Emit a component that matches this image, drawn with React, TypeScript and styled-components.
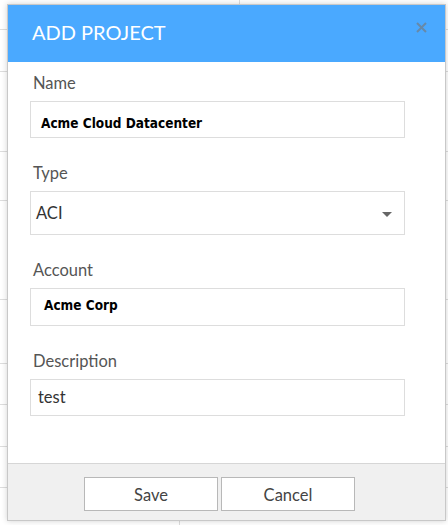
import React from "react";
import styled, { createGlobalStyle } from "styled-components";

const Global = createGlobalStyle`
  html, body { margin: 0; padding: 0; }
  body {
    width: 448px;
    height: 525px;
    overflow: hidden;
    background: #ffffff;
    font-family: Lato, "Open Sans", "Liberation Sans", sans-serif;
  }
  * { box-sizing: border-box; }
`;

const Page = styled.div`
  position: relative;
  width: 448px;
  height: 525px;
  overflow: hidden;
`;

const Backdrop = styled.div`
  display: flex;
  flex-direction: column;
  width: 100%;
`;

const BgRow = styled.div<{ $h: number }>`
  height: ${(p) => p.$h}px;
  border-bottom: 1px solid #dddddd;
  display: flex;
`;

const BgCell = styled.div<{ $w: number }>`
  width: ${(p) => p.$w}px;
  border-right: 1px solid #dddddd;
`;

const Modal = styled.div`
  position: absolute;
  left: 7px;
  top: 4px;
  width: 439px;
  height: 517px;
  background: #ffffff;
  border: 1px solid #c8c8c8;
  box-shadow: 0 0 6px rgba(0, 0, 0, 0.18);
  display: flex;
  flex-direction: column;
`;

const Header = styled.div`
  height: 57px;
  background: #4aa9ff;
  display: flex;
  align-items: center;
  justify-content: space-between;
  padding: 0 18px 0 24px;
  flex-shrink: 0;
`;

const Title = styled.h2`
  margin: 0;
  font-family: Lato, "Open Sans", sans-serif;
  font-weight: 400;
  font-size: 20px;
  line-height: 24px;
  color: #ffffff;
  margin-top: -3px;
`;

const Close = styled.button`
  border: 0;
  background: transparent;
  padding: 0;
  width: 11px;
  height: 11px;
  margin-top: -13px;
  margin-right: 0;
  display: flex;
  cursor: pointer;
`;

const Body = styled.div`
  flex: 1;
  padding: 13px 40px 0 22px;
  display: flex;
  flex-direction: column;
`;

const Field = styled.div`
  display: flex;
  flex-direction: column;
  margin-bottom: 27px;
`;

const Label = styled.label`
  display: block;
  height: 20px;
  line-height: 16px;
  font-size: 16.5px;
  color: #555555;
  padding-left: 3px;
  margin-bottom: 6px;
`;

const Box = styled.div<{ $h: number; $pl: number; $pt: number }>`
  position: relative;
  width: 375px;
  height: ${(p) => p.$h}px;
  border: 1px solid #dddddd;
  background: #ffffff;
  padding-left: ${(p) => p.$pl}px;
  padding-top: ${(p) => p.$pt}px;
  display: flex;
  align-items: flex-start;
`;

const BoldValue = styled.span`
  font-family: "DejaVu Sans Condensed", "DejaVu Sans", Tahoma, sans-serif;
  font-weight: 700;
  font-size: 13.5px;
  line-height: normal;
  color: #000000;
`;

const PlainValue = styled.span`
  font-size: 16.5px;
  line-height: normal;
  color: #333333;
`;

const Caret = styled.span`
  position: absolute;
  right: 12px;
  top: 20px;
  width: 0;
  height: 0;
  border-left: 5px solid transparent;
  border-right: 5px solid transparent;
  border-top: 5px solid #666666;
`;

const Footer = styled.div`
  height: 57px;
  background: #f0f0f0;
  border-top: 1px solid #d6d6d6;
  display: flex;
  align-items: flex-start;
  padding: 13px 0 0 76px;
  gap: 3px;
  flex-shrink: 0;
`;

const Button = styled.button`
  width: 134px;
  height: 34px;
  background: #ffffff;
  border: 1px solid #b8b8b8;
  font-family: Lato, "Open Sans", sans-serif;
  font-size: 16.5px;
  color: #444444;
  padding: 2px 0 0 0;
  cursor: pointer;
`;

export default function App() {
  const rows = [31, 43, 81, 50, 100, 65, 42, 43, 42, 40];
  return (
    <Page>
      <Global />
      <Backdrop>
        {rows.map((h, i) => (
          <BgRow key={i} $h={h - 1}>
            <BgCell $w={i === 0 ? 240 : 180} />
          </BgRow>
        ))}
      </Backdrop>
      <Modal>
        <Header>
          <Title>ADD PROJECT</Title>
          <Close aria-label="Close">
            <svg width="11" height="11" viewBox="0 0 11 11">
              <path d="M1 1 L10 10 M10 1 L1 10" stroke="#6789a8" strokeWidth="2" />
            </svg>
          </Close>
        </Header>
        <Body>
          <Field>
            <Label>Name</Label>
            <Box $h={37} $pl={10} $pt={13}>
              <BoldValue>Acme Cloud Datacenter</BoldValue>
            </Box>
          </Field>
          <Field>
            <Label>Type</Label>
            <Box $h={44} $pl={5} $pt={11}>
              <PlainValue>ACI</PlainValue>
              <Caret />
            </Box>
          </Field>
          <Field>
            <Label>Account</Label>
            <Box $h={38} $pl={13} $pt={8}>
              <BoldValue>Acme Corp</BoldValue>
            </Box>
          </Field>
          <Field>
            <Label>Description</Label>
            <Box $h={37} $pl={7} $pt={7}>
              <PlainValue>test</PlainValue>
            </Box>
          </Field>
        </Body>
        <Footer>
          <Button>Save</Button>
          <Button>Cancel</Button>
        </Footer>
      </Modal>
    </Page>
  );
}
